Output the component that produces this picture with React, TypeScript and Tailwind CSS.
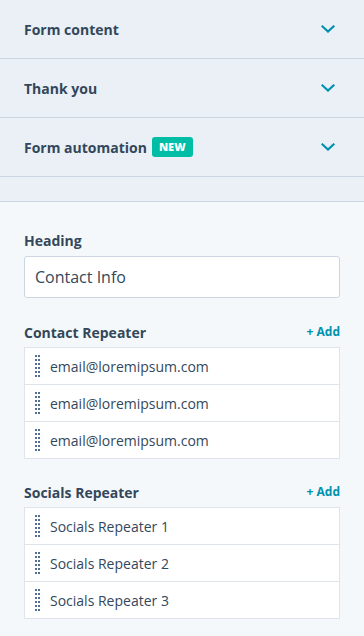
import React from 'react'

const font = { fontFamily: '"Open Sans", "Noto Sans", sans-serif' }

function Chevron() {
  return (
    <svg width="14" height="8" viewBox="0 0 14 8" fill="none">
      <path d="M1.5 1.5 7 6.5 12.5 1.5" stroke="#0091ae" strokeWidth="2.2" strokeLinecap="square" />
    </svg>
  )
}

function DragHandle() {
  return (
    <div className="grid grid-cols-2 gap-x-px gap-y-[2px] w-[5px] shrink-0">
      {Array.from({ length: 12 }).map((_, i) => (
        <span key={i} className="block w-[2px] h-[2px] bg-[#516f90]" />
      ))}
    </div>
  )
}

function AccordionRow({ title, badge }: { title: string; badge?: string }) {
  return (
    <div className="flex items-center justify-between h-[59px] pl-6 pr-[29px] border-b border-[#cbd6e2]">
      <div className="flex items-center gap-[5px]">
        <span className="text-[14px] font-bold text-[#33475b]">{title}</span>
        {badge && (
          <span className="bg-[#00bda5] text-white text-[11px] font-extrabold rounded-[3px] px-[7px] h-[20px] flex items-center">
            {badge}
          </span>
        )}
      </div>
      <Chevron />
    </div>
  )
}

function Repeater({ label, items }: { label: string; items: string[] }) {
  return (
    <div>
      <div className="flex items-center justify-between h-[20px] mb-[5px]">
        <span className="text-[14px] font-bold text-[#33475b]">{label}</span>
        <span className="text-[12px] font-bold text-[#0091ae]">+ Add</span>
      </div>
      <div className="border border-[#dfe3eb] bg-white">
        {items.map((item, i) => (
          <div
            key={i}
            className={`flex items-center gap-[10px] pl-[10px] ${
              i > 0 ? 'h-[37px] border-t border-[#dfe3eb]' : 'h-[36px]'
            }`}
          >
            <DragHandle />
            <span className="text-[14px] text-[#33475b]">{item}</span>
          </div>
        ))}
      </div>
    </div>
  )
}

export default function App() {
  return (
    <div className="w-[364px] h-[636px] overflow-hidden bg-[#f5f8fa]" style={font}>
      <div className="bg-[#eaf0f6] border-b border-[#cbd6e2]">
        <AccordionRow title="Form content" />
        <AccordionRow title="Thank you" />
        <AccordionRow title="Form automation" badge="NEW" />
        <div className="h-[24px]" />
      </div>

      <div className="px-6 pt-[28px]">
        <div className="text-[14px] font-bold text-[#33475b] h-[20px] mb-[6px]">Heading</div>
        <div className="h-[42px] border border-[#cbd6e2] rounded-[3px] bg-white flex items-center px-[10px] text-[16px] text-[#33475b]">
          Contact Info
        </div>

        <div className="mt-[24px]">
          <Repeater
            label="Contact Repeater"
            items={['email@loremipsum.com', 'email@loremipsum.com', 'email@loremipsum.com']}
          />
        </div>

        <div className="mt-[23px]">
          <Repeater
            label="Socials Repeater"
            items={['Socials Repeater 1', 'Socials Repeater 2', 'Socials Repeater 3']}
          />
        </div>
      </div>
    </div>
  )
}
